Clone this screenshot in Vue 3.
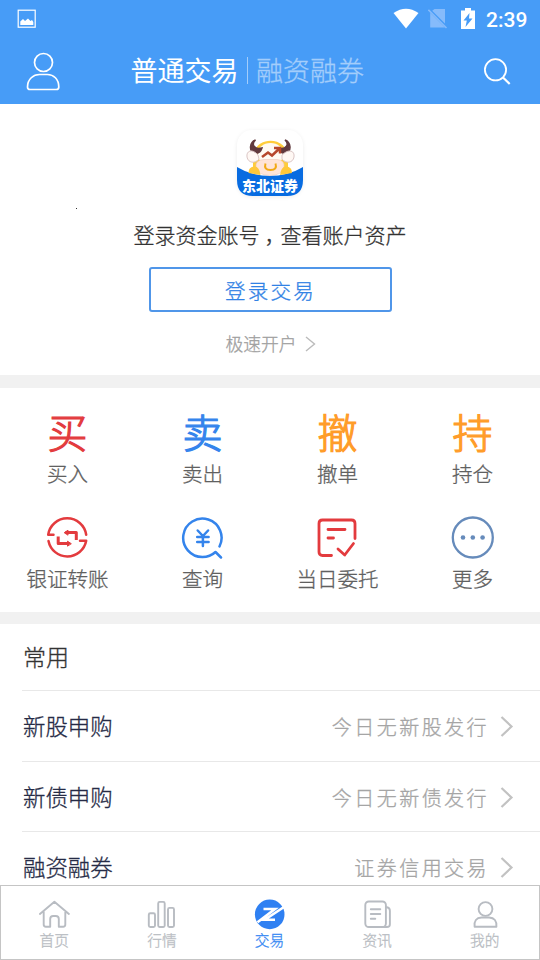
<script setup>
const actions = [
  { label: '买入', glyph: '买', tone: 'red' },
  { label: '卖出', glyph: '卖', tone: 'blue' },
  { label: '撤单', glyph: '撤', tone: 'orange' },
  { label: '持仓', glyph: '持', tone: 'orange' },
  { label: '银证转账', icon: 'transfer', tone: 'red' },
  { label: '查询', icon: 'query', tone: 'blue' },
  { label: '当日委托', icon: 'order', tone: 'red' },
  { label: '更多', icon: 'more', tone: 'slate' },
]
const rows = [
  { name: '新股申购', note: '今日无新股发行' },
  { name: '新债申购', note: '今日无新债发行' },
  { name: '融资融券', note: '证券信用交易' },
]
const tabs = [
  { label: '首页', icon: 'home' },
  { label: '行情', icon: 'chart' },
  { label: '交易', icon: 'trade', active: true },
  { label: '资讯', icon: 'news' },
  { label: '我的', icon: 'user' },
]
</script>

<template>
  <div class="screen">
    <header class="header">
      <div class="status">
        <svg class="picture" width="20" height="20" viewBox="0 0 20 20">
          <rect x="1.2" y="1.2" width="17" height="17" fill="none" stroke="#fff" stroke-width="1.2" />
          <path d="M3.3 16V12.5L6 10l2 2 3-2.5 2.5 2.5 1.5-1 1.3 2V16z" fill="#fff" />
        </svg>
        <svg class="wifi" width="28" height="22" viewBox="0 0 28 22">
          <path d="M1.500 5Q14-3.600 26.500 5L14 20.500z" fill="#fff" />
        </svg>
        <svg class="sim" width="20" height="22" viewBox="0 0 20 22">
          <path d="M6.500 1H17v14.500L4.200 2.800zM2.200 4.800 17 19.500H2.200z" fill="#86bbfb" />
          <path d="M.4 1.800 18.500 20" stroke="#86bbfb" stroke-width="1.500" />
        </svg>
        <svg class="battery" width="16" height="23" viewBox="0 0 16 23">
          <path d="M1 2.500h4V0h6v2.500h4V21H1z" fill="#fff" />
          <path d="M9.500 5 3.500 12.500h3.300L5.500 19l7-8.500H9z" fill="#479cf7" />
        </svg>
        <span class="clock">2:39</span>
      </div>
      <div class="navbar">
        <svg width="36" height="40" viewBox="0 0 36 40" fill="none" stroke="#fff" stroke-width="1.700">
          <circle cx="18.500" cy="11.500" r="9" />
          <path d="M5 38.500Q2.500 38.500 2.500 36C2.500 28 8.500 23.500 14.500 23.500h8C28.500 23.500 33.800 28 33.800 36q0 2.500-2.500 2.500z" />
        </svg>
        <div class="modes">
          <span class="mode on">普通交易</span>
          <i class="bar"></i>
          <span class="mode">融资融券</span>
        </div>
        <svg class="search" width="28" height="28" viewBox="0 0 28 28" fill="none" stroke="#fff" stroke-width="1.800">
          <circle cx="12.500" cy="12.800" r="10.600" />
          <path d="m20 20.500 6.700 6.500" stroke-width="2.200" />
        </svg>
      </div>
    </header>

    <section class="login">
      <div class="logo">
        <svg width="66" height="66" viewBox="0 0 66 66">
          <path d="M16 28C16 5 51 5 51 28V42H16z" fill="#ffcd3a" />
          <ellipse cx="33.500" cy="24" rx="13" ry="11" fill="#fffaf3" />
          <path d="M18.500 10C14 14 17 20 25 18q-2 6-7 5C11 21 13 12 18.500 10zM48 10c4.500 4 1.500 10-6.500 8q2 6 7 5c7-2 5-11-.5-13z" fill="#613a3e" stroke="#613a3e" stroke-width="1.500" />
          <path d="M21 25C15 18 9 21 10 27c1 6 8 7 12 2zM45 25c7-7 13-4 12 2-1 6-8 7-12 2z" fill="#fff8f4" stroke="#dbc6c5" />
          <path d="m25 27 6-4.500 4 3 7.500-7M37 18h6v5.500" fill="none" stroke="#b6472c" stroke-width="2.500" />
          <path d="M19 37q-1-7 8-7.500h13q8 .5 7 7.500-2 8.500-14 8.500T19 37z" fill="#ffe4d8" stroke="#edc6b9" stroke-width=".6" />
          <path d="M28.500 33.500q-2 6.500 5 6.500t5-6.500" fill="none" stroke="#f2aa15" stroke-width="2" />
          <path d="M0 37Q8 42 17 44 33 48 49 44 58 42 66 37V50Q66 66 50 66H16Q0 66 0 50z" fill="#086ce1" />
          <path d="M11.500 43q0-6.500 6-6.500 5 0 6 8.500zM43 45q1-8.500 6-8.500 6 0 6 6.500z" fill="#ffc83a" />
        </svg>
        <span class="logo-name">东北证券</span>
      </div>
      <i class="speck"></i>
      <p class="prompt">登录资金账号<span class="comma">，</span>查看账户资产</p>
      <button class="login-btn">登录交易</button>
      <div class="open">
        <span>极速开户</span>
        <svg width="12" height="18" viewBox="0 0 12 18" fill="none" stroke="#bbb" stroke-width="1.400"><path d="m1 3 8.500 7L1 17" /></svg>
      </div>
    </section>

    <section class="actions">
      <div v-for="a in actions" :key="a.label" class="action">
        <div class="symbol" :class="a.tone">
          <span v-if="a.glyph" class="glyph">{{ a.glyph }}</span>
          <svg v-else width="44" height="44" viewBox="0 0 44 44" fill="none" stroke="currentColor" stroke-width="2.500" stroke-linecap="round" stroke-linejoin="round">
            <template v-if="a.icon === 'transfer'">
              <path d="M7.500 18.800H2.200A19.200 19.200 0 0 1 40.200 18.800M34 24.800H40.200A19.200 19.200 0 0 1 2.500 25" />
              <path d="M19.500 16.500h10.800v7.500M23 27.500H12.200v-7" stroke-width="3" stroke-linecap="butt" />
              <path d="m18.500 16.500 3.500-2.300v4.600zM25 27.500l-3.500-2.300v4.600z" fill="currentColor" stroke-width="1" />
            </template>
            <template v-else-if="a.icon === 'query'">
              <path d="M38.500 30.500A19.200 19.200 0 1 0 21.500 41Q29 41 34.500 36L40 41.500" />
              <path d="m16.700 14.500 5.200 5.500 5.200-5.500M16.200 21h11.400M16.200 26h11.400M21.900 20v10" stroke-width="2.500" />
            </template>
            <template v-else-if="a.icon === 'order'">
              <path d="M15.500 39.500H6.500q-3.500 0-3.500-3.500V7.500Q3 4 6.500 4H35.500Q39 4 39 7.500v15M12 13.500H29M12 22h5.500" stroke-width="2.800" />
              <path d="m22 33 6.700 6L37.500 27.500" stroke-width="2.800" />
            </template>
            <template v-else>
              <circle cx="21.800" cy="21.500" r="20" stroke-width="2.300" />
              <g fill="currentColor" stroke="none"><circle cx="12" cy="21.500" r="2.300" /><circle cx="21.800" cy="21.500" r="2.300" /><circle cx="31.600" cy="21.500" r="2.300" /></g>
            </template>
          </svg>
        </div>
        <span class="action-label">{{ a.label }}</span>
      </div>
    </section>

    <section class="common">
      <h2>常用</h2>
      <div v-for="r in rows" :key="r.name" class="row">
        <span class="row-name">{{ r.name }}</span>
        <span class="row-note">{{ r.note }}</span>
        <svg width="14" height="22" viewBox="0 0 14 22" fill="none" stroke="#c2c2c2" stroke-width="2.200"><path d="m1.500 2 10 9.500-10 9.500" /></svg>
      </div>
    </section>

    <nav class="tabs">
      <div v-for="t in tabs" :key="t.label" class="tab" :class="{ active: t.active }">
        <svg width="32" height="32" viewBox="0 0 32 32" fill="none" stroke="currentColor" stroke-width="1.900" stroke-linecap="round" stroke-linejoin="round">
          <path v-if="t.icon === 'home'" d="M.9 16 15.400 3.700l14.500 12.300M4.700 14v12.500q0 2.200 2.200 2.200h4.300V21q0-3 3-3h2.600q3 0 3 3v7.700h4.300q2.200 0 2.200-2.200v-12.500" />
          <g v-else-if="t.icon === 'chart'">
            <rect x="2.800" y="15.200" width="6.200" height="13.800" rx="1.500" />
            <rect x="12.200" y="3.900" width="6.500" height="25.100" rx="1.500" />
            <rect x="22" y="9.900" width="6" height="19.100" rx="1.500" />
          </g>
          <g v-else-if="t.icon === 'trade'">
            <circle cx="15.700" cy="16.400" r="14.800" fill="#2f80f2" stroke="none" />
            <path d="M9.500 11h11.500L3.500 24.200M30 9 10.800 21.700H21" stroke="#fff" stroke-width="2.600" stroke-linecap="butt" stroke-linejoin="miter" />
          </g>
          <g v-else-if="t.icon === 'news'">
            <rect x="3.300" y="3.500" width="20.600" height="25.500" rx="3.500" />
            <path d="M23.900 9.200h1q3 .5 3 3.500V26.200q0 2.800-3 2.800h-4.500M8.800 11.200h9.500M8.800 16h9.500M8.800 20.700h4.500" />
          </g>
          <g v-else>
            <circle cx="16.500" cy="11" r="6.900" />
            <path d="M5.600 28.700q-1-8.800 7-9.200h7.500q8 .4 7.300 9.200z" />
          </g>
        </svg>
        <span>{{ t.label }}</span>
      </div>
    </nav>
  </div>
</template>

<style>
body { margin: 0; background: #fff; }
</style>

<style scoped>
.screen { width: 540px; height: 960px; display: flex; flex-direction: column; overflow: hidden; background: #fff; color: #333; font-family: "Noto Sans CJK SC", sans-serif; font-weight: 300; -webkit-text-stroke: .3px currentColor; }
.screen * { box-sizing: border-box; }
.screen svg { display: block; flex: none; }
.header { height: 104px; flex: none; background: #479cf7; }
.status { height: 38px; display: flex; align-items: center; padding: 0 12px 0 17px; }
.wifi { margin-left: auto; }
.sim { margin-left: 8px; }
.battery { margin-left: 12px; }
.clock { margin-left: 10px; width: 42px; font: 500 21px/38px Roboto, sans-serif; color: #fff; padding-top: 2px; -webkit-text-stroke: 0; }
.navbar { height: 66px; display: flex; align-items: center; padding: 0 29px 0 25px; }
.modes { display: flex; align-items: center; margin: -2px 0 0 69.500px; }
.search { margin-left: auto; }
.mode { font-size: 27px; line-height: 40px; color: #a3cdfb; }
.mode.on { color: #fff; font-weight: 400; -webkit-text-stroke: 0; }
.bar { width: 1.500px; height: 27px; margin: 0 8px; background: #a3cdfb; }
.login { position: relative; height: 271px; flex: none; display: flex; flex-direction: column; align-items: center; padding-top: 26px; }
.logo { position: relative; width: 66px; height: 66px; border-radius: 15px; box-shadow: 0 1px 4px #00000014; }
.logo-name { position: absolute; left: 0; right: 0; bottom: 1px; text-align: center; font-size: 14px; line-height: 20px; font-weight: 900; color: #fff; -webkit-text-stroke: 0; }
.speck { position: absolute; left: 76px; top: 104px; width: 1px; height: 1px; background: #333; }
.prompt { margin: 23px 0 0; font-size: 21px; line-height: 30px; white-space: nowrap; }
.comma { padding-left: 5px; letter-spacing: -5px; }
.login-btn { width: 243px; height: 45px; margin-top: 18px; padding: 1px 0 0 1px; border: 2px solid #5096e9; border-radius: 3px; background: #fff; color: #3182e5; font-family: inherit; font-weight: 300; font-size: 20.500px; line-height: 40px; letter-spacing: 2.200px; -webkit-text-stroke: .3px currentColor; }
.open { display: flex; align-items: center; gap: 8px; margin: 18px 0 0 2px; font-size: 17.800px; line-height: 26px; color: #a0a0a0; }
.actions { height: 249px; flex: none; display: grid; grid-template-columns: repeat(4, 1fr); grid-template-rows: 104.500px 104.500px; padding-top: 10px; border-top: 13px solid #f1f1f1; border-bottom: 12.500px solid #f1f1f1; }
.action { display: flex; flex-direction: column; align-items: center; padding-top: 13px; }
.symbol { height: 44px; width: 44px; display: flex; justify-content: center; align-items: center; }
.glyph { font-size: 40px; line-height: 44px; margin-top: -4px; -webkit-text-stroke: 1.200px currentColor; }
.red { color: #e33b3e; }
.blue { color: #3484ec; }
.orange { color: #ff9c29; }
.slate { color: #668bbb; }
.action-label { margin-top: 3px; font-size: 20.500px; line-height: 30px; color: #606060; white-space: nowrap; }
.common { flex: 1; min-height: 0; overflow: hidden; padding-left: 22px; }
.common h2 { margin: 0; height: 66px; font-size: 23px; font-weight: 300; line-height: 64px; padding-left: 1px; }
.row { height: 70.700px; border-top: 1.500px solid #e8e8e8; display: flex; align-items: center; padding-right: 26px; }
.row-name { flex: 1; padding-left: 1px; margin-top: -2px; font-size: 22.400px; color: #262b46; }
.row-note { font-size: 20px; letter-spacing: 2.450px; margin-right: 11px; padding-top: 1px; color: #a5a5a5; }
.tabs { height: 75px; flex: none; display: flex; border: 1px solid #c5c5c5; background: #fff; }
.tab { flex: 1; display: flex; flex-direction: column; align-items: center; padding-top: 12px; color: #b8bcc2; font-size: 14.700px; line-height: 22px; }
.tab > span { margin: -1px 1px 0 0; }
.tab.active { color: #3588f3; }
</style>
